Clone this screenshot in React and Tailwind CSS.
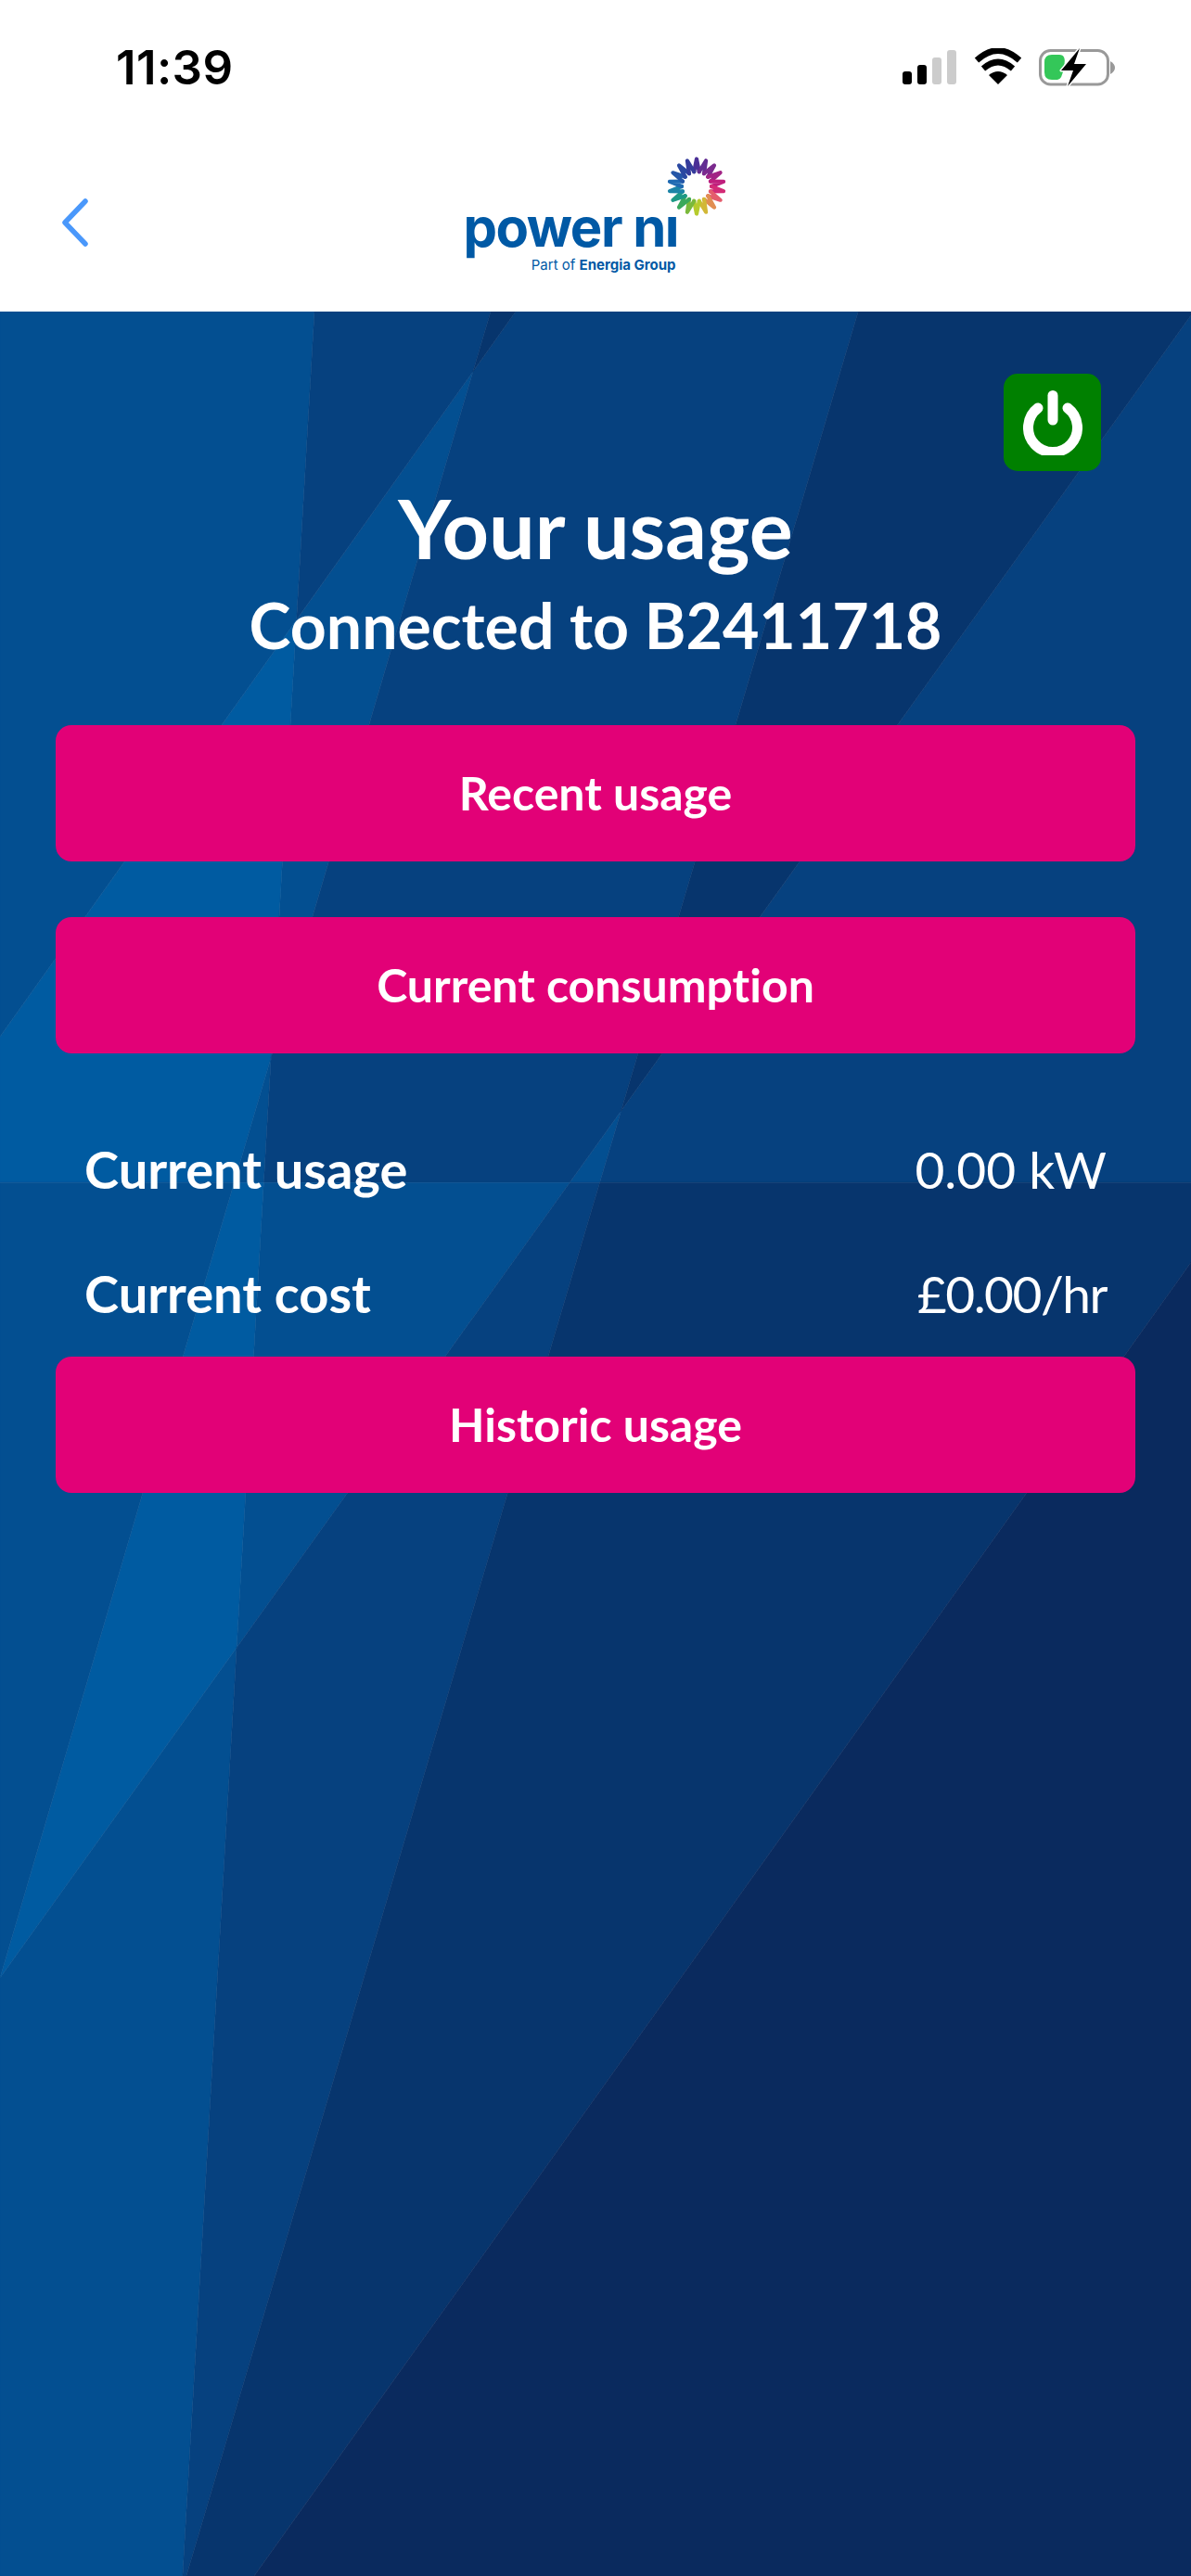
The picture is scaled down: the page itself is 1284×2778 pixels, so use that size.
import React from 'react';

const FONT = "font-['Lato','Noto_Sans',sans-serif] [font-variant-ligatures:none]";

// Background facets, levels 0 (brightest) to 4 (darkest)
const LEVELS = ['#005ba1', '#034f91', '#06417f', '#07356d', '#0a2a5e'];

const lineAt = (x0, y0, k) => (y) => x0 + k * (y - y0);
const L1 = lineAt(339, 336, -0.0582);
const L2 = lineAt(556, 336, -0.711);
const L3 = lineAt(529, 336, -0.2944);
const L4 = lineAt(924, 340, -0.2966);
const L5 = lineAt(1284, 340, -0.7161);
const L6 = lineAt(1106, 1611, -0.713);

// Clip a polygon to one side of a line (side 1 = right of it, -1 = left of it)
function clip(poly, line, side) {
    const out = [];
    const d = ([x, y]) => (x - line(y)) * side;
    poly.forEach((p, i) => {
        const q = poly[(i + 1) % poly.length];
        const dp = d(p);
        const dq = d(q);
        if (dp >= 0) out.push(p);
        if (dp * dq < 0) {
            const t = dp / (dp - dq);
            out.push([p[0] + (q[0] - p[0]) * t, p[1] + (q[1] - p[1]) * t]);
        }
    });
    return out;
}

// Split a rectangle along every line; each line adds to the level on its dark side
function facets(top, bottom, lines, base) {
    let parts = [{ poly: [[0, top], [1284, top], [1284, bottom], [0, bottom]], level: base }];
    lines.forEach(([line, darkSide]) => {
        parts = parts.flatMap(({ poly, level }) => [
            { poly: clip(poly, line, darkSide), level: level + 1 },
            { poly: clip(poly, line, -darkSide), level },
        ]);
    });
    return parts.filter((p) => p.poly.length > 2);
}

const UPPER = facets(336, 1275, [[L2, -1], [L1, 1], [L3, 1], [L4, 1], [L5, -1]], -1);
const LOWER = facets(1275, 2778, [[L3, -1], [L1, 1], [L5, 1], [L4, 1], [L6, 1]], 0);

function Background() {
    const parts = [...UPPER, ...LOWER].sort((a, b) => a.level - b.level);
    return (
        <svg className="absolute inset-0 w-full h-full" viewBox="0 336 1284 2442" preserveAspectRatio="none">
            {parts.map((p, i) => {
                const color = LEVELS[Math.max(0, Math.min(4, p.level))];
                return (
                    <polygon
                        key={i}
                        points={p.poly.map((pt) => pt.join(',')).join(' ')}
                        fill={color}
                        stroke={color}
                        strokeWidth="0.5"
                    />
                );
            })}
            <rect x="0" y="1275" width="1284" height="1" fill="#ffffff" opacity="0.07" />
        </svg>
    );
}

const SUN_STOPS = [
    [0, '#4a2f96'], [40, '#7b2a8e'], [70, '#b51f80'], [95, '#cf1f78'], [125, '#e8686a'],
    [155, '#d9b33a'], [180, '#b6cb2d'], [205, '#6cb43f'], [228, '#1fa36a'], [252, '#1b8fa0'],
    [275, '#1f6fb5'], [305, '#2551a5'], [335, '#2e3f9c'], [360, '#4a2f96'],
];

function sunColor(deg) {
    const i = SUN_STOPS.findIndex((s) => s[0] >= deg);
    const [a, ca] = SUN_STOPS[Math.max(0, i - 1)];
    const [b, cb] = SUN_STOPS[Math.max(0, i)];
    const t = b === a ? 0 : (deg - a) / (b - a);
    const mix = (n) => {
        const pa = parseInt(ca.slice(n, n + 2), 16);
        const pb = parseInt(cb.slice(n, n + 2), 16);
        return Math.round(pa + (pb - pa) * t);
    };
    return `rgb(${mix(1)},${mix(3)},${mix(5)})`;
}

function Sun() {
    const count = 18;
    const point = (deg, r) => {
        const a = ((deg - 90) * Math.PI) / 180;
        return `${34 + r * Math.cos(a)} ${34 + r * Math.sin(a)}`;
    };
    const step = 360 / count;
    const segments = [];
    for (let i = 0; i < count; i++) {
        const deg = i * step;
        segments.push(
            <path
                key={i}
                d={`M${point(deg - step / 2, 16)} L${point(deg, 29.5)} L${point(deg + step / 2, 16)}`}
                fill="none"
                stroke={sunColor(deg)}
                strokeWidth="4.2"
                strokeLinecap="round"
                strokeLinejoin="round"
            />
        );
    }
    return <svg width="68" height="68" viewBox="0 0 68 68">{segments}</svg>;
}

function Logo() {
    return (
        <div className="relative w-[232px] h-[127px] flex flex-col justify-end items-end text-[#0059a5] font-['Inter','Lato',sans-serif]">
            <div className="absolute right-[-53px] top-[-1px]">
                <Sun />
            </div>
            <div className="w-full text-[58px] leading-[64px] font-bold tracking-[-1.5px] whitespace-nowrap">power nı</div>
            <div className="text-[15px] leading-[18px] whitespace-nowrap pr-[3px]">
                Part of <span className="font-bold">Energia Group</span>
            </div>
        </div>
    );
}

function StatusIcons() {
    return (
        <div className="flex items-start">
            <svg width="232" height="42" viewBox="970 52 232 42">
                <rect x="973" y="77" width="10" height="14" rx="3" fill="#000" />
                <rect x="989" y="70" width="10" height="21" rx="3" fill="#000" />
                <rect x="1005" y="62" width="10" height="29" rx="3" fill="#ccc" />
                <rect x="1021" y="54" width="10" height="37" rx="3" fill="#ccc" />
                <path d="M1076 91 L1066 81 Q1076 73 1086 81 Z" fill="#000" />
                <path d="M1060 74 Q1076 60 1092 74" fill="none" stroke="#000" strokeWidth="6.5" strokeLinecap="butt" />
                <path d="M1053 65 Q1076 44 1099 65" fill="none" stroke="#000" strokeWidth="6.5" strokeLinecap="butt" />
                <rect x="1121.5" y="54.5" width="73" height="36.5" rx="11" fill="none" stroke="#999" strokeWidth="3" />
                <path d="M1197 66 Q1202 69 1202 73 Q1202 77 1197 80 Z" fill="#999" />
                <path d="M1134 59 H1142 Q1150 59 1147 72 Q1145 86 1140 86 H1134 Q1126 86 1126 78 V67 Q1126 59 1134 59 Z" fill="#34c759" />
                <path
                    d="M1164 52 L1144 76 H1157 L1151 93 L1171 69 H1158 Z"
                    fill="#000"
                    stroke="#fff"
                    strokeWidth="3"
                    paintOrder="stroke"
                    strokeLinejoin="round"
                />
            </svg>
        </div>
    );
}

function PowerIcon() {
    return (
        <svg width="64" height="70" viewBox="0 0 64 70" fill="none" stroke="#fff" strokeWidth="11" strokeLinecap="round">
            <path d="M32 5.5 V32" />
            <path d="M16 19 A26.5 26.5 0 1 0 48 19" />
        </svg>
    );
}

function ActionButton({ children }) {
    return (
        <button className="w-full h-[147px] rounded-[17px] bg-[#e20177] text-white text-[50px] font-bold flex items-center justify-center">
            {children}
        </button>
    );
}

function InfoRow({ label, value, valueClass = "" }) {
    return (
        <div className="flex items-center justify-between pl-[31px] pr-[31px] h-[60px]">
            <span className="text-white text-[56px] leading-[60px] font-bold">{label}</span>
            <span className={`text-white text-[55px] leading-[60px] font-normal ${valueClass}`}>{value}</span>
        </div>
    );
}

export default function App() {
    return (
        <div className={`w-[1284px] h-[2778px] flex flex-col overflow-hidden ${FONT}`}>
            <header className="h-[336px] bg-white flex flex-col">
                <div className="flex items-start justify-between pt-[52px] pl-[125px] pr-[82px] h-[160px]">
                    <span className="text-[51px] leading-[42px] font-semibold text-black font-['Inter',sans-serif] tracking-[0.4px]">11:39</span>
                    <StatusIcons />
                </div>
                <div className="relative flex justify-center">
                    <svg className="absolute left-[64px] top-[51px]" width="34" height="56" viewBox="0 0 34 56" fill="none" stroke="#4a98fb" strokeWidth="5.5" strokeLinecap="round" strokeLinejoin="round">
                        <path d="M28 6 L6 29 L28 52" />
                    </svg>
                    <div className="mt-[8px] mr-[53px]"><Logo /></div>
                </div>
            </header>
            <main className="relative flex-1">
                <Background />
                <div className="relative px-[60px] pt-[67px] flex flex-col">
                    <div className="flex justify-end pr-[37px]">
                        <div className="w-[105px] h-[105px] rounded-[15px] bg-[#008000] flex items-center justify-center">
                            <PowerIcon />
                        </div>
                    </div>
                    <h1 className="mt-[16px] text-center text-white text-[88px] leading-[90px] font-bold">Your usage</h1>
                    <h2 className="mt-[24px] text-center text-white text-[68px] leading-[72px] font-bold">Connected to B2411718</h2>
                    <div className="mt-[72px] flex flex-col gap-[60px]">
                        <ActionButton>Recent usage</ActionButton>
                        <ActionButton>Current consumption</ActionButton>
                    </div>
                    <div className="mt-[95px] flex flex-col gap-[74px]">
                        <InfoRow label="Current usage" value="0.00 kW" />
                        <InfoRow label="Current cost" value="£0.00/hr" valueClass="tracking-[-1.5px]" />
                    </div>
                    <div className="mt-[38px]">
                        <ActionButton>Historic usage</ActionButton>
                    </div>
                </div>
            </main>
        </div>
    );
}
